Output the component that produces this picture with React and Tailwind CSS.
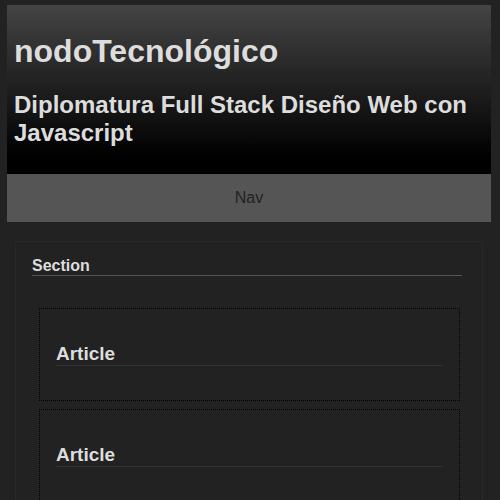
const articles = ['Article', 'Article', 'Article']

export default function App() {
  return (
    <div className="min-h-[500px] bg-[#222] pt-[5px] pl-[7px] pr-[9px] font-['Liberation_Sans',Arial,sans-serif]">
      <header className="h-[169px] bg-[linear-gradient(#444,#000_90%)] px-[7px] pt-[28px] text-[#ddd]">
        <h1 className="text-[32px] font-bold leading-[37px]">nodoTecnológico</h1>
        <h2 className="mt-[21px] text-[24px] font-bold leading-[28px]">Diplomatura Full Stack Diseño Web con Javascript</h2>
      </header>

      <nav className="flex h-[48px] items-center justify-center bg-[#555] text-[16px] text-[#222]">Nav</nav>

      <section className="mt-[19px] ml-[8px] mr-[8px] border border-[#282828] pt-[14px] pb-[10px]">
        <h3 className="ml-[16px] mr-[20px] border-b border-[#555] text-[16px] font-bold leading-[19px] text-[#ddd]">Section</h3>
        <div className="ml-[23px] mr-[22px] mt-[32px] flex flex-col gap-[8px]">
          {articles.map((a, i) => (
            <article key={i} className="h-[93px] border border-dotted border-black px-[16px] pt-[34px]">
              <h4 className="border-b border-[#333] text-[19px] font-bold leading-[22px] text-[#ddd]">{a}</h4>
            </article>
          ))}
        </div>
      </section>
    </div>
  )
}
